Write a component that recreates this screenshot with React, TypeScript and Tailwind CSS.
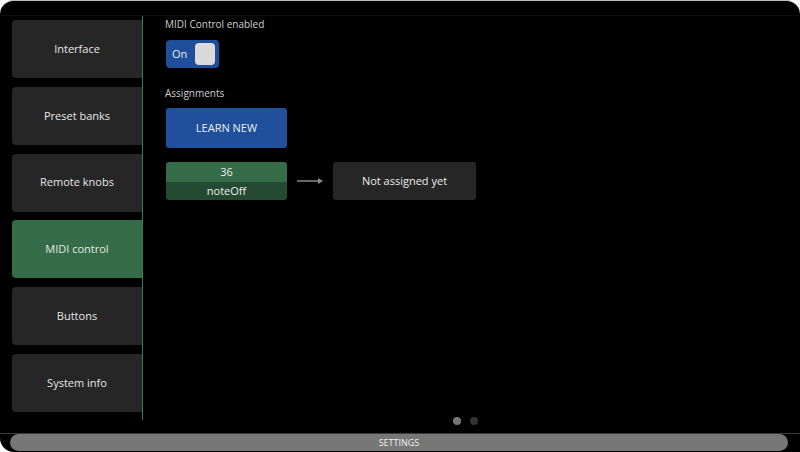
const menu = ['Interface', 'Preset banks', 'Remote knobs', 'MIDI control', 'Buttons', 'System info'];

export default function App() {
  return (
    <div className="w-[800px] h-[452px] bg-white" style={{ fontFamily: '"Open Sans", "Noto Sans", sans-serif' }}>
      <div className="w-full h-full bg-black rounded-t-[14px] rounded-bl-[14px] border-t border-[#bdbdbd] flex flex-col overflow-hidden">
        <div className="h-[15px] border-b border-[#0e0e0e] shrink-0" />
        <div className="flex flex-1 min-h-0">
          <div className="w-[143px] h-[404px] pl-[12px] border-r border-[#2f7d48] pt-[4px] flex flex-col gap-[8.8px] shrink-0">
            {menu.map((m) => (
              <div
                key={m}
                className={`h-[58px] rounded-l-[4px] flex items-center justify-center text-[11px] font-medium text-[#e6e6e6] ${
                  m === 'MIDI control' ? 'bg-[#356c48]' : 'bg-[#262626]'
                }`}
              >
                {m}
              </div>
            ))}
          </div>
          <div className="flex-1 flex flex-col">
            <div className="flex-1 pl-[22px] pt-[1px]">
              <div className="text-[10px] text-[#cfcfcf] leading-[14px]">MIDI Control enabled</div>
              <div className="mt-[9px] ml-[1px] w-[53px] h-[28px] rounded-[4px] bg-[#1f4f9b] flex items-center pl-[6px] pr-[4px] justify-between">
                <span className="text-[11px] text-[#ececec]">On</span>
                <span className="w-[20px] h-[22px] rounded-[4px] bg-[#dadada]" />
              </div>
              <div className="mt-[18px] text-[10px] text-[#cfcfcf] leading-[14px]">Assignments</div>
              <div className="mt-[8px] ml-[1px] w-[121px] h-[40px] rounded-[3px] bg-[#20509b] flex items-center justify-center text-[11px] text-[#ececec]">
                LEARN NEW
              </div>
              <div className="mt-[14px] ml-[1px] flex items-center">
                <div className="w-[121px] h-[38px] rounded-[3px] overflow-hidden flex flex-col text-[11px] text-[#ececec]">
                  <div className="h-[20px] bg-[#356c48] flex items-center justify-center">36</div>
                  <div className="flex-1 bg-[#244a31] flex items-center justify-center">noteOff</div>
                </div>
                <svg width="46" height="10" viewBox="0 0 46 10" className="shrink-0">
                  <line x1="10" y1="5" x2="33" y2="5" stroke="#8a8a8a" strokeWidth="1.5" />
                  <path d="M31 2 L36 5 L31 8 Z" fill="#8a8a8a" />
                </svg>
                <div className="w-[143px] h-[38px] rounded-[3px] bg-[#262626] flex items-center justify-center text-[11px] text-[#ececec]">
                  Not assigned yet
                </div>
              </div>
            </div>
            <div className="h-[21px] flex items-start pt-[5px] pl-[310px] gap-[9px]">
              <span className="w-[8px] h-[8px] rounded-full bg-[#777]" />
              <span className="w-[8px] h-[8px] rounded-full bg-[#333]" />
            </div>
          </div>
        </div>
        <div className="h-[19px] border-t border-[#3a3a3a] pl-[10px] pr-[12px] shrink-0">
          <div className="h-[17px] rounded-full bg-[#777] flex items-center justify-center text-[9px] text-[#f0f0f0]">
            SETTINGS
          </div>
        </div>
      </div>
    </div>
  );
}
